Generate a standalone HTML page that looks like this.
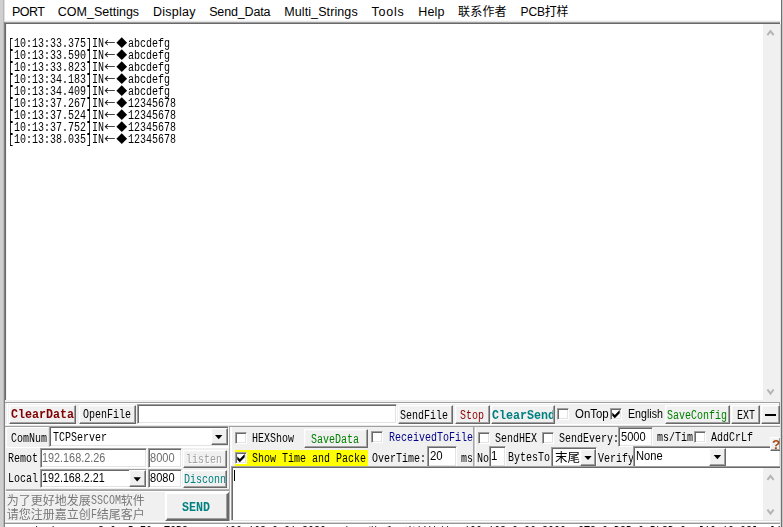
<!DOCTYPE html>
<html lang="zh"><head><meta charset="utf-8"><title>SSCOM</title>
<style>
*{box-sizing:border-box;margin:0;padding:0}
html,body{width:783px;height:527px;overflow:hidden;background:#f0f0f0}
body{position:relative;font-family:"Liberation Sans","Noto Sans CJK SC",sans-serif;color:#000}
#app{position:absolute;left:0;top:0;width:783px;height:527px;overflow:hidden;background:#f0f0f0}
#app div{position:absolute}
#win{left:0;top:0;width:783px;height:527px;will-change:transform}
.t{white-space:pre;font-family:"Liberation Mono","Noto Sans CJK SC",monospace;color:#000}
.t .a{display:inline-block;height:100%;vertical-align:top;overflow:visible;white-space:pre}
.t .a span{display:inline-block;transform-origin:0 0;white-space:pre}
.t .w{display:inline-block;height:100%;vertical-align:top;text-align:center;font-family:"Noto Sans CJK SC","Liberation Mono",sans-serif;overflow:visible}
.ar{white-space:pre;font-family:"Liberation Sans","Noto Sans CJK SC",sans-serif;line-height:1;transform-origin:0 0}
.mn{white-space:pre;font-family:"Liberation Sans","Noto Sans CJK SC",sans-serif;line-height:14px;top:5px;color:#000}
.btn{background:#f0f0f0;border:1px solid;border-color:#fff #696969 #696969 #fff;box-shadow:inset -1px -1px 0 #a0a0a0,inset 1px 1px 0 #f4f4f4}
.fld{background:#fff;border:1px solid;border-color:#a0a0a0 #fff #fff #a0a0a0;box-shadow:inset 1px 1px 0 #696969,inset -1px -1px 0 #e3e3e3}
.cb{background:#fff;border:1px solid;border-color:#a0a0a0 #fff #fff #a0a0a0;box-shadow:inset 1px 1px 0 #696969,inset -1px -1px 0 #e3e3e3}
.cb svg{position:absolute;left:-1px;top:-1px}
.cj{white-space:pre;font-family:"Liberation Sans","Noto Sans CJK SC",sans-serif}
</style></head>
<body><div id="app">
<div class="x" style="left:5px;top:0px;width:776px;height:22px;background:#fff"></div>
<div class="x" style="left:5px;top:20px;width:776px;height:1px;background:#f8f8f8"></div>
<div class="x" style="left:5px;top:21px;width:776px;height:1px;background:#e4e4e4"></div>
<div class="mn" style="left:11.9px;font-size:12.5px;letter-spacing:-0.5px">PORT</div>
<div class="mn" style="left:57.8px;font-size:12.5px;letter-spacing:0px">COM_Settings</div>
<div class="mn" style="left:152.9px;font-size:12.5px;letter-spacing:0.27px">Display</div>
<div class="mn" style="left:209.2px;font-size:12.5px;letter-spacing:-0.15px">Send_Data</div>
<div class="mn" style="left:284.2px;font-size:12.5px;letter-spacing:0.1px">Multi_Strings</div>
<div class="mn" style="left:371.5px;font-size:12.5px;letter-spacing:0.76px">Tools</div>
<div class="mn" style="left:418.3px;font-size:12.5px;letter-spacing:0.17px">Help</div>
<div class="mn" style="left:458.1px;font-size:12px;letter-spacing:0.17px">联系作者</div>
<div class="mn" style="left:520.6px;font-size:12px;letter-spacing:-0.18px">PCB打样</div>
<div id="win">
<div class="x" style="left:5px;top:22px;width:775px;height:1px;background:#a0a0a0"></div>
<div class="x" style="left:5px;top:23px;width:775px;height:1px;background:#696969"></div>
<div class="x" style="left:5px;top:24px;width:758px;height:376px;background:#fff"></div>
<div class="x" style="left:5px;top:24px;width:1px;height:376px;background:#696969"></div>
<div class="x" style="left:6px;top:24px;width:1px;height:376px;background:#f4f4f4"></div>
<div class="x" style="left:780px;top:22px;width:1px;height:380px;background:#fff"></div>
<div class="t" style="left:7.8px;top:38.11px;font-size:12px;line-height:12px;height:12px;"><span class="a" style="width:96px"><span style="transform:scaleX(0.8332)">[10:13:33.375]IN</span></span><span class="w" style="font-size:11px;position:relative;top:-1.7px;width:12px">←</span><span class="w" style="font-size:11px;position:relative;top:-1.7px;width:12px">◆</span><span class="a" style="width:42px"><span style="transform:scaleX(0.8332)">abcdefg</span></span></div>
<div class="t" style="left:7.8px;top:50.11px;font-size:12px;line-height:12px;height:12px;"><span class="a" style="width:96px"><span style="transform:scaleX(0.8332)">[10:13:33.590]IN</span></span><span class="w" style="font-size:11px;position:relative;top:-1.7px;width:12px">←</span><span class="w" style="font-size:11px;position:relative;top:-1.7px;width:12px">◆</span><span class="a" style="width:42px"><span style="transform:scaleX(0.8332)">abcdefg</span></span></div>
<div class="t" style="left:7.8px;top:62.11px;font-size:12px;line-height:12px;height:12px;"><span class="a" style="width:96px"><span style="transform:scaleX(0.8332)">[10:13:33.823]IN</span></span><span class="w" style="font-size:11px;position:relative;top:-1.7px;width:12px">←</span><span class="w" style="font-size:11px;position:relative;top:-1.7px;width:12px">◆</span><span class="a" style="width:42px"><span style="transform:scaleX(0.8332)">abcdefg</span></span></div>
<div class="t" style="left:7.8px;top:74.11px;font-size:12px;line-height:12px;height:12px;"><span class="a" style="width:96px"><span style="transform:scaleX(0.8332)">[10:13:34.183]IN</span></span><span class="w" style="font-size:11px;position:relative;top:-1.7px;width:12px">←</span><span class="w" style="font-size:11px;position:relative;top:-1.7px;width:12px">◆</span><span class="a" style="width:42px"><span style="transform:scaleX(0.8332)">abcdefg</span></span></div>
<div class="t" style="left:7.8px;top:86.11px;font-size:12px;line-height:12px;height:12px;"><span class="a" style="width:96px"><span style="transform:scaleX(0.8332)">[10:13:34.409]IN</span></span><span class="w" style="font-size:11px;position:relative;top:-1.7px;width:12px">←</span><span class="w" style="font-size:11px;position:relative;top:-1.7px;width:12px">◆</span><span class="a" style="width:42px"><span style="transform:scaleX(0.8332)">abcdefg</span></span></div>
<div class="t" style="left:7.8px;top:98.11px;font-size:12px;line-height:12px;height:12px;"><span class="a" style="width:96px"><span style="transform:scaleX(0.8332)">[10:13:37.267]IN</span></span><span class="w" style="font-size:11px;position:relative;top:-1.7px;width:12px">←</span><span class="w" style="font-size:11px;position:relative;top:-1.7px;width:12px">◆</span><span class="a" style="width:48px"><span style="transform:scaleX(0.8332)">12345678</span></span></div>
<div class="t" style="left:7.8px;top:110.11px;font-size:12px;line-height:12px;height:12px;"><span class="a" style="width:96px"><span style="transform:scaleX(0.8332)">[10:13:37.524]IN</span></span><span class="w" style="font-size:11px;position:relative;top:-1.7px;width:12px">←</span><span class="w" style="font-size:11px;position:relative;top:-1.7px;width:12px">◆</span><span class="a" style="width:48px"><span style="transform:scaleX(0.8332)">12345678</span></span></div>
<div class="t" style="left:7.8px;top:122.11px;font-size:12px;line-height:12px;height:12px;"><span class="a" style="width:96px"><span style="transform:scaleX(0.8332)">[10:13:37.752]IN</span></span><span class="w" style="font-size:11px;position:relative;top:-1.7px;width:12px">←</span><span class="w" style="font-size:11px;position:relative;top:-1.7px;width:12px">◆</span><span class="a" style="width:48px"><span style="transform:scaleX(0.8332)">12345678</span></span></div>
<div class="t" style="left:7.8px;top:134.11px;font-size:12px;line-height:12px;height:12px;"><span class="a" style="width:96px"><span style="transform:scaleX(0.8332)">[10:13:38.035]IN</span></span><span class="w" style="font-size:11px;position:relative;top:-1.7px;width:12px">←</span><span class="w" style="font-size:11px;position:relative;top:-1.7px;width:12px">◆</span><span class="a" style="width:48px"><span style="transform:scaleX(0.8332)">12345678</span></span></div>
<svg style="position:absolute;left:763px;top:24px;background:#f0f0f0" width="17" height="376" viewBox="0 0 17 376"><path d="M4.4 11.1 L7.5 7.1 L10.6 11.1" fill="none" stroke="#b4b4b4" stroke-width="2"/><path d="M4.4 365.5 L7.5 369.5 L10.6 365.5" fill="none" stroke="#b4b4b4" stroke-width="2"/></svg>
<div class="x" style="left:5px;top:402px;width:775px;height:1px;background:#a0a0a0"></div>
<div class="x" style="left:7px;top:403px;width:772px;height:1px;background:#fff"></div>
<div class="x" style="left:779px;top:402px;width:1px;height:23px;background:#a0a0a0"></div>
<div class="x" style="left:7px;top:403px;width:1px;height:22px;background:#fff"></div>
<div class="btn" style="left:9px;top:405px;width:67px;height:19px;"></div>
<div class="t" style="left:10.9px;top:408.34px;font-size:13px;line-height:13px;height:13px;color:#800000;font-weight:bold;"><span class="a" style="width:63px"><span style="transform:scaleX(0.8973)">ClearData</span></span></div>
<div class="btn" style="left:79px;top:405px;width:57px;height:19px;"></div>
<div class="t" style="left:82.6px;top:409.11px;font-size:12px;line-height:12px;height:12px;"><span class="a" style="width:48px"><span style="transform:scaleX(0.8332)">OpenFile</span></span></div>
<div class="fld" style="left:137px;top:404px;width:260px;height:20px;"></div>
<div class="btn" style="left:398px;top:405px;width:55px;height:19px;"></div>
<div class="t" style="left:400.3px;top:410.11px;font-size:12px;line-height:12px;height:12px;"><span class="a" style="width:48px"><span style="transform:scaleX(0.8332)">SendFile</span></span></div>
<div class="btn" style="left:455px;top:405px;width:35px;height:19px;"></div>
<div class="t" style="left:460.0px;top:410.11px;font-size:12px;line-height:12px;height:12px;color:#8b0000;"><span class="a" style="width:24px"><span style="transform:scaleX(0.8332)">Stop</span></span></div>
<div class="btn" style="left:491px;top:405px;width:64px;height:19px;overflow:hidden"></div>
<div class="t" style="left:492.3px;top:409.34px;font-size:13px;line-height:13px;height:13px;color:#008080;font-weight:bold;width:61px;overflow:hidden;"><span class="a" style="width:63px"><span style="transform:scaleX(0.8973)">ClearSend</span></span></div>
<div class="cb" style="left:557px;top:408px;width:12px;height:12px;"></div>
<div class="ar" style="left:574.9px;top:407.63px;font-size:12.6px;transform:scaleX(0.9081);">OnTop</div>
<div class="cb" style="left:610px;top:408px;width:12px;height:12px;"><svg width="12" height="12" viewBox="0 0 12 12"><path d="M2.3 4.4 L4.8 6.9 L9.7 2 L9.7 5.3 L4.8 10.2 L2.3 7.7 Z" fill="#000"/></svg></div>
<div class="ar" style="left:628.0px;top:407.63px;font-size:12.6px;transform:scaleX(0.8448);">English</div>
<div class="btn" style="left:665px;top:405px;width:65px;height:19px;overflow:hidden"></div>
<div class="t" style="left:667.0px;top:410.11px;font-size:12px;line-height:12px;height:12px;color:#008000;"><span class="a" style="width:60px"><span style="transform:scaleX(0.8332)">SaveConfig</span></span></div>
<div class="btn" style="left:731px;top:405px;width:29px;height:19px;"></div>
<div class="t" style="left:736.6px;top:410.11px;font-size:12px;line-height:12px;height:12px;"><span class="a" style="width:18px"><span style="transform:scaleX(0.8332)">EXT</span></span></div>
<div class="btn" style="left:761px;top:405px;width:19px;height:19px;"></div>
<div class="x" style="left:765px;top:414px;width:11px;height:2px;background:#000"></div>
<div class="x" style="left:5px;top:424px;width:775px;height:1px;background:#fff"></div>
<div class="x" style="left:5px;top:425px;width:775px;height:1px;background:#e8e8e8"></div>
<div class="x" style="left:5px;top:426px;width:775px;height:1px;background:#a0a0a0"></div>
<div class="x" style="left:6px;top:427px;width:42px;height:1px;background:#fff"></div>
<div class="x" style="left:6px;top:427px;width:1px;height:20px;background:#fff"></div>
<div class="x" style="left:6px;top:447px;width:223px;height:1px;background:#fff"></div>
<div class="x" style="left:48px;top:428px;width:1px;height:19px;background:#e3e3e3"></div>
<div class="t" style="left:10.6px;top:433.11px;font-size:12px;line-height:12px;height:12px;"><span class="a" style="width:36px"><span style="transform:scaleX(0.8332)">ComNum</span></span></div>
<div class="fld" style="left:49px;top:426px;width:180px;height:21px;"></div>
<div class="t" style="left:52.8px;top:432.11px;font-size:12px;line-height:12px;height:12px;"><span class="a" style="width:54px"><span style="transform:scaleX(0.8332)">TCPServer</span></span></div>
<div class="btn" style="left:211px;top:428px;width:17px;height:17px;"><svg width="17" height="17" viewBox="0 0 17 17" style="position:absolute;left:-1px;top:-1px"><path d="M4 7 h7.4 l-3.7 4.2 z" fill="#000"/></svg></div>
<div class="t" style="left:8.2px;top:453.11px;font-size:12px;line-height:12px;height:12px;"><span class="a" style="width:30px"><span style="transform:scaleX(0.8332)">Remot</span></span></div>
<div class="fld" style="left:40px;top:448px;width:107px;height:20px;"></div>
<div class="ar" style="left:42.1px;top:451.80px;font-size:12.4px;transform:scaleX(0.8748);color:#6d6d6d;">192.168.2.26</div>
<div class="fld" style="left:148px;top:448px;width:34px;height:20px;"></div>
<div class="ar" style="left:150.1px;top:451.80px;font-size:12.4px;transform:scaleX(0.8920);color:#6d6d6d;">8000</div>
<div class="btn" style="left:183px;top:450px;width:44px;height:18px;"></div>
<div class="t" style="left:186.6px;top:455.11px;font-size:12px;line-height:12px;height:12px;color:#fff;"><span class="a" style="width:36px"><span style="transform:scaleX(0.8332)">listen</span></span></div>
<div class="t" style="left:185.8px;top:454.11px;font-size:12px;line-height:12px;height:12px;color:#a0a0a0;"><span class="a" style="width:36px"><span style="transform:scaleX(0.8332)">listen</span></span></div>
<div class="t" style="left:8.2px;top:473.11px;font-size:12px;line-height:12px;height:12px;"><span class="a" style="width:30px"><span style="transform:scaleX(0.8332)">Local</span></span></div>
<div class="fld" style="left:40px;top:469px;width:107px;height:19px;"></div>
<div class="ar" style="left:42.2px;top:471.80px;font-size:12.4px;transform:scaleX(0.8665);">192.168.2.21</div>
<div class="btn" style="left:129px;top:470px;width:17px;height:17px;"><svg width="17" height="17" viewBox="0 0 17 17" style="position:absolute;left:-1px;top:-1px"><path d="M4.5 7.2 h7.4 l-3.7 4.2 z" fill="#000"/></svg></div>
<div class="fld" style="left:148px;top:469px;width:34px;height:19px;"></div>
<div class="ar" style="left:150.1px;top:471.80px;font-size:12.4px;transform:scaleX(0.8920);">8080</div>
<div class="btn" style="left:183px;top:470px;width:44px;height:18px;overflow:hidden"></div>
<div class="t" style="left:184.2px;top:474.11px;font-size:12px;line-height:12px;height:12px;color:#008080;width:41px;overflow:hidden;"><span class="a" style="width:42px"><span style="transform:scaleX(0.8332)">Disconn</span></span></div>
<div class="x" style="left:6px;top:489px;width:223px;height:1px;background:#b4b4b4"></div>
<div class="x" style="left:6px;top:490px;width:223px;height:1px;background:#a0a0a0"></div>
<div class="x" style="left:6px;top:491px;width:223px;height:1px;background:#fff"></div>
<div class="t" style="left:6.8px;top:495.11px;font-size:12px;line-height:12px;height:12px;color:#787878;"><span class="w" style="position:relative;top:-1.2px;width:12px">为</span><span class="w" style="position:relative;top:-1.2px;width:12px">了</span><span class="w" style="position:relative;top:-1.2px;width:12px">更</span><span class="w" style="position:relative;top:-1.2px;width:12px">好</span><span class="w" style="position:relative;top:-1.2px;width:12px">地</span><span class="w" style="position:relative;top:-1.2px;width:12px">发</span><span class="w" style="position:relative;top:-1.2px;width:12px">展</span><span class="a" style="width:30px"><span style="transform:scaleX(0.8332)">SSCOM</span></span><span class="w" style="position:relative;top:-1.2px;width:12px">软</span><span class="w" style="position:relative;top:-1.2px;width:12px">件</span></div>
<div class="t" style="left:6.8px;top:509.11px;font-size:12px;line-height:12px;height:12px;color:#787878;"><span class="w" style="position:relative;top:-1.2px;width:12px">请</span><span class="w" style="position:relative;top:-1.2px;width:12px">您</span><span class="w" style="position:relative;top:-1.2px;width:12px">注</span><span class="w" style="position:relative;top:-1.2px;width:12px">册</span><span class="w" style="position:relative;top:-1.2px;width:12px">嘉</span><span class="w" style="position:relative;top:-1.2px;width:12px">立</span><span class="w" style="position:relative;top:-1.2px;width:12px">创</span><span class="a" style="width:6px"><span style="transform:scaleX(0.8332)">F</span></span><span class="w" style="position:relative;top:-1.2px;width:12px">结</span><span class="w" style="position:relative;top:-1.2px;width:12px">尾</span><span class="w" style="position:relative;top:-1.2px;width:12px">客</span><span class="w" style="position:relative;top:-1.2px;width:12px">户</span></div>
<div class="btn" style="left:165px;top:492px;width:64px;height:29px;border-width:2px;border-color:#fff #696969 #696969 #fff;box-shadow:inset -1px -1px 0 #a0a0a0"></div>
<div class="t" style="left:182.2px;top:501.73px;font-size:12.5px;line-height:12.5px;height:12.5px;color:#008080;font-weight:bold;"><span class="a" style="width:28px"><span style="transform:scaleX(0.9332)">SEND</span></span></div>
<div class="x" style="left:229px;top:427px;width:1px;height:95px;background:#b4b4b4"></div>
<div class="x" style="left:230px;top:427px;width:1px;height:95px;background:#fafafa"></div>
<div class="x" style="left:231px;top:427px;width:1px;height:39px;background:#fff"></div>
<div class="cb" style="left:235px;top:432px;width:12px;height:12px;"></div>
<div class="t" style="left:252.3px;top:433.11px;font-size:12px;line-height:12px;height:12px;"><span class="a" style="width:42px"><span style="transform:scaleX(0.8332)">HEXShow</span></span></div>
<div class="btn" style="left:304px;top:429px;width:64px;height:19px;"></div>
<div class="t" style="left:311.0px;top:434.11px;font-size:12px;line-height:12px;height:12px;color:#008000;"><span class="a" style="width:48px"><span style="transform:scaleX(0.8332)">SaveData</span></span></div>
<div class="cb" style="left:371px;top:431px;width:12px;height:12px;"></div>
<div class="t" style="left:388.8px;top:432.11px;font-size:12px;line-height:12px;height:12px;color:#00008b;"><span class="a" style="width:84px"><span style="transform:scaleX(0.8332)">ReceivedToFile</span></span></div>
<div class="x" style="left:473px;top:427px;width:1px;height:40px;background:#a8a8a8"></div>
<div class="x" style="left:474px;top:427px;width:1px;height:40px;background:#c8c8c8"></div>
<div class="x" style="left:475px;top:427px;width:1px;height:40px;background:#fff"></div>
<div class="cb" style="left:478px;top:432px;width:12px;height:12px;"></div>
<div class="t" style="left:495.3px;top:433.11px;font-size:12px;line-height:12px;height:12px;"><span class="a" style="width:42px"><span style="transform:scaleX(0.8332)">SendHEX</span></span></div>
<div class="cb" style="left:542px;top:432px;width:12px;height:12px;"></div>
<div class="t" style="left:559.1px;top:433.11px;font-size:12px;line-height:12px;height:12px;"><span class="a" style="width:60px"><span style="transform:scaleX(0.8332)">SendEvery:</span></span></div>
<div class="fld" style="left:618px;top:427px;width:35px;height:20px;"></div>
<div class="ar" style="left:621.0px;top:430.80px;font-size:12.4px;transform:scaleX(0.8956);">5000</div>
<div class="t" style="left:656.8px;top:432.11px;font-size:12px;line-height:12px;height:12px;"><span class="a" style="width:36px"><span style="transform:scaleX(0.8332)">ms/Tim</span></span></div>
<div class="cb" style="left:694px;top:431px;width:12px;height:12px;"></div>
<div class="t" style="left:711.4px;top:432.11px;font-size:12px;line-height:12px;height:12px;"><span class="a" style="width:42px"><span style="transform:scaleX(0.8332)">AddCrLf</span></span></div>
<div class="x" style="left:235px;top:450px;width:133px;height:16px;background:#ffff00"></div>
<div class="cb" style="left:235px;top:452px;width:12px;height:12px;"><svg width="12" height="12" viewBox="0 0 12 12"><path d="M2.3 4.4 L4.8 6.9 L9.7 2 L9.7 5.3 L4.8 10.2 L2.3 7.7 Z" fill="#000"/></svg></div>
<div class="t" style="left:252.3px;top:453.11px;font-size:12px;line-height:12px;height:12px;width:115px;overflow:hidden;"><span class="a" style="width:114px"><span style="transform:scaleX(0.8332)">Show Time and Packe</span></span></div>
<div class="t" style="left:372.1px;top:453.11px;font-size:12px;line-height:12px;height:12px;"><span class="a" style="width:54px"><span style="transform:scaleX(0.8332)">OverTime:</span></span></div>
<div class="fld" style="left:427px;top:446px;width:30px;height:21px;"></div>
<div class="ar" style="left:430.0px;top:449.80px;font-size:12.4px;transform:scaleX(0.9205);">20</div>
<div class="t" style="left:460.5px;top:453.11px;font-size:12px;line-height:12px;height:12px;"><span class="a" style="width:12px"><span style="transform:scaleX(0.8332)">ms</span></span></div>
<div class="t" style="left:476.6px;top:453.11px;font-size:12px;line-height:12px;height:12px;"><span class="a" style="width:12px"><span style="transform:scaleX(0.8332)">No</span></span></div>
<div class="fld" style="left:489px;top:446px;width:17px;height:21px;"></div>
<div class="ar" style="left:491.0px;top:449.80px;font-size:12.4px;transform:scaleX(0.9267);">1</div>
<div class="t" style="left:507.6px;top:452.11px;font-size:12px;line-height:12px;height:12px;"><span class="a" style="width:42px"><span style="transform:scaleX(0.8332)">BytesTo</span></span></div>
<div class="fld" style="left:551px;top:447px;width:46px;height:20px;"></div>
<div class="cj" style="left:555px;top:451px;font-size:12.5px;line-height:14px">末尾</div>
<div class="btn" style="left:580px;top:449px;width:16px;height:17px;"><svg width="16" height="17" viewBox="0 0 16 17" style="position:absolute;left:-1px;top:-1px"><path d="M4.3 6.9 h7.4 l-3.7 4.2 z" fill="#000"/></svg></div>
<div class="t" style="left:597.8px;top:453.11px;font-size:12px;line-height:12px;height:12px;"><span class="a" style="width:36px"><span style="transform:scaleX(0.8332)">Verify</span></span></div>
<div class="fld" style="left:633px;top:446px;width:148px;height:22px;"></div>
<div class="ar" style="left:636.3px;top:449.80px;font-size:12.4px;transform:scaleX(0.8979);">None</div>
<div class="btn" style="left:709px;top:448px;width:17px;height:18px;"><svg width="17" height="18" viewBox="0 0 17 18" style="position:absolute;left:-1px;top:-1px"><path d="M4.7 7 h7.4 l-3.7 4.2 z" fill="#000"/></svg></div>
<div class="btn" style="left:770px;top:437px;width:11px;height:14px;"></div>
<div class="ar" style="left:772.2px;top:438.72px;font-size:12.5px;transform:scaleX(1.0880);color:#a84814;font-weight:bold;">?</div>
<div class="x" style="left:231px;top:466px;width:549px;height:1px;background:#a0a0a0"></div>
<div class="x" style="left:231px;top:467px;width:549px;height:1px;background:#696969"></div>
<div class="x" style="left:231px;top:468px;width:532px;height:52px;background:#fff"></div>
<div class="x" style="left:231px;top:466px;width:1px;height:55px;background:#a0a0a0"></div>
<div class="x" style="left:232px;top:467px;width:1px;height:53px;background:#696969"></div>
<div class="x" style="left:234px;top:470px;width:1px;height:11px;background:#000"></div>
<svg style="position:absolute;left:763px;top:468px;background:#f0f0f0" width="17" height="52" viewBox="0 0 17 52"><path d="M4.4 11.9 L7.5 7.9 L10.6 11.9" fill="none" stroke="#b4b4b4" stroke-width="2"/><path d="M4.4 41.6 L7.5 45.6 L10.6 41.6" fill="none" stroke="#b4b4b4" stroke-width="2"/></svg>
<div class="x" style="left:780px;top:466px;width:1px;height:56px;background:#fff"></div>
<div class="x" style="left:231px;top:520px;width:549px;height:1px;background:#e3e3e3"></div>
<div class="x" style="left:5px;top:521px;width:776px;height:1px;background:#fff"></div>
<div class="x" style="left:5px;top:522px;width:776px;height:1px;background:#d4d4d4"></div>
<div class="x" style="left:5px;top:523px;width:776px;height:1px;background:#989898"></div>
<div class="x" style="left:5px;top:524px;width:776px;height:3px;background:#fff;overflow:hidden"><div class="t" style="left:3px;top:1.6px;font-size:12px;line-height:12px;height:12px;color:#000"><span class="a" style="width:324px"><span style="transform:scaleX(0.8332)">www.daxia.com  S:0  R:72  TCPServer 192.168.2.21:8080 </span></span><span class="w" style="width:12px">已</span><span class="w" style="width:12px">打</span><span class="w" style="width:12px">开</span><span class="w" style="width:12px">监</span><span class="w" style="width:12px">听</span><span class="a" style="width:12px"><span style="transform:scaleX(0.8332)">  </span></span><span class="w" style="width:12px">当</span><span class="w" style="width:12px">前</span><span class="w" style="width:12px">连</span><span class="w" style="width:12px">接</span><span class="a" style="width:468px"><span style="transform:scaleX(0.8332)">: 192.168.2.26:8000  CTS=0 DSR=0 RLSD=0  [10:13:38] client 192.168.2.26 linked</span></span></div></div>
</div>
<div class="x" style="left:0px;top:0px;width:3px;height:527px;background:#cfcfcf"></div>
<div class="x" style="left:3px;top:0px;width:1px;height:527px;background:#b8b8b8"></div>
<div class="x" style="left:4px;top:0px;width:1px;height:22px;background:#e0e0e0"></div>
<div class="x" style="left:4px;top:22px;width:1px;height:505px;background:#808080"></div>
<div class="x" style="left:781px;top:0px;width:1px;height:527px;background:#707070"></div>
<div class="x" style="left:782px;top:0px;width:1px;height:527px;background:#c8c8c8"></div>
<div class="x" style="left:780px;top:24px;width:1px;height:503px;background:#dcdcdc"></div>
</div></body></html>
